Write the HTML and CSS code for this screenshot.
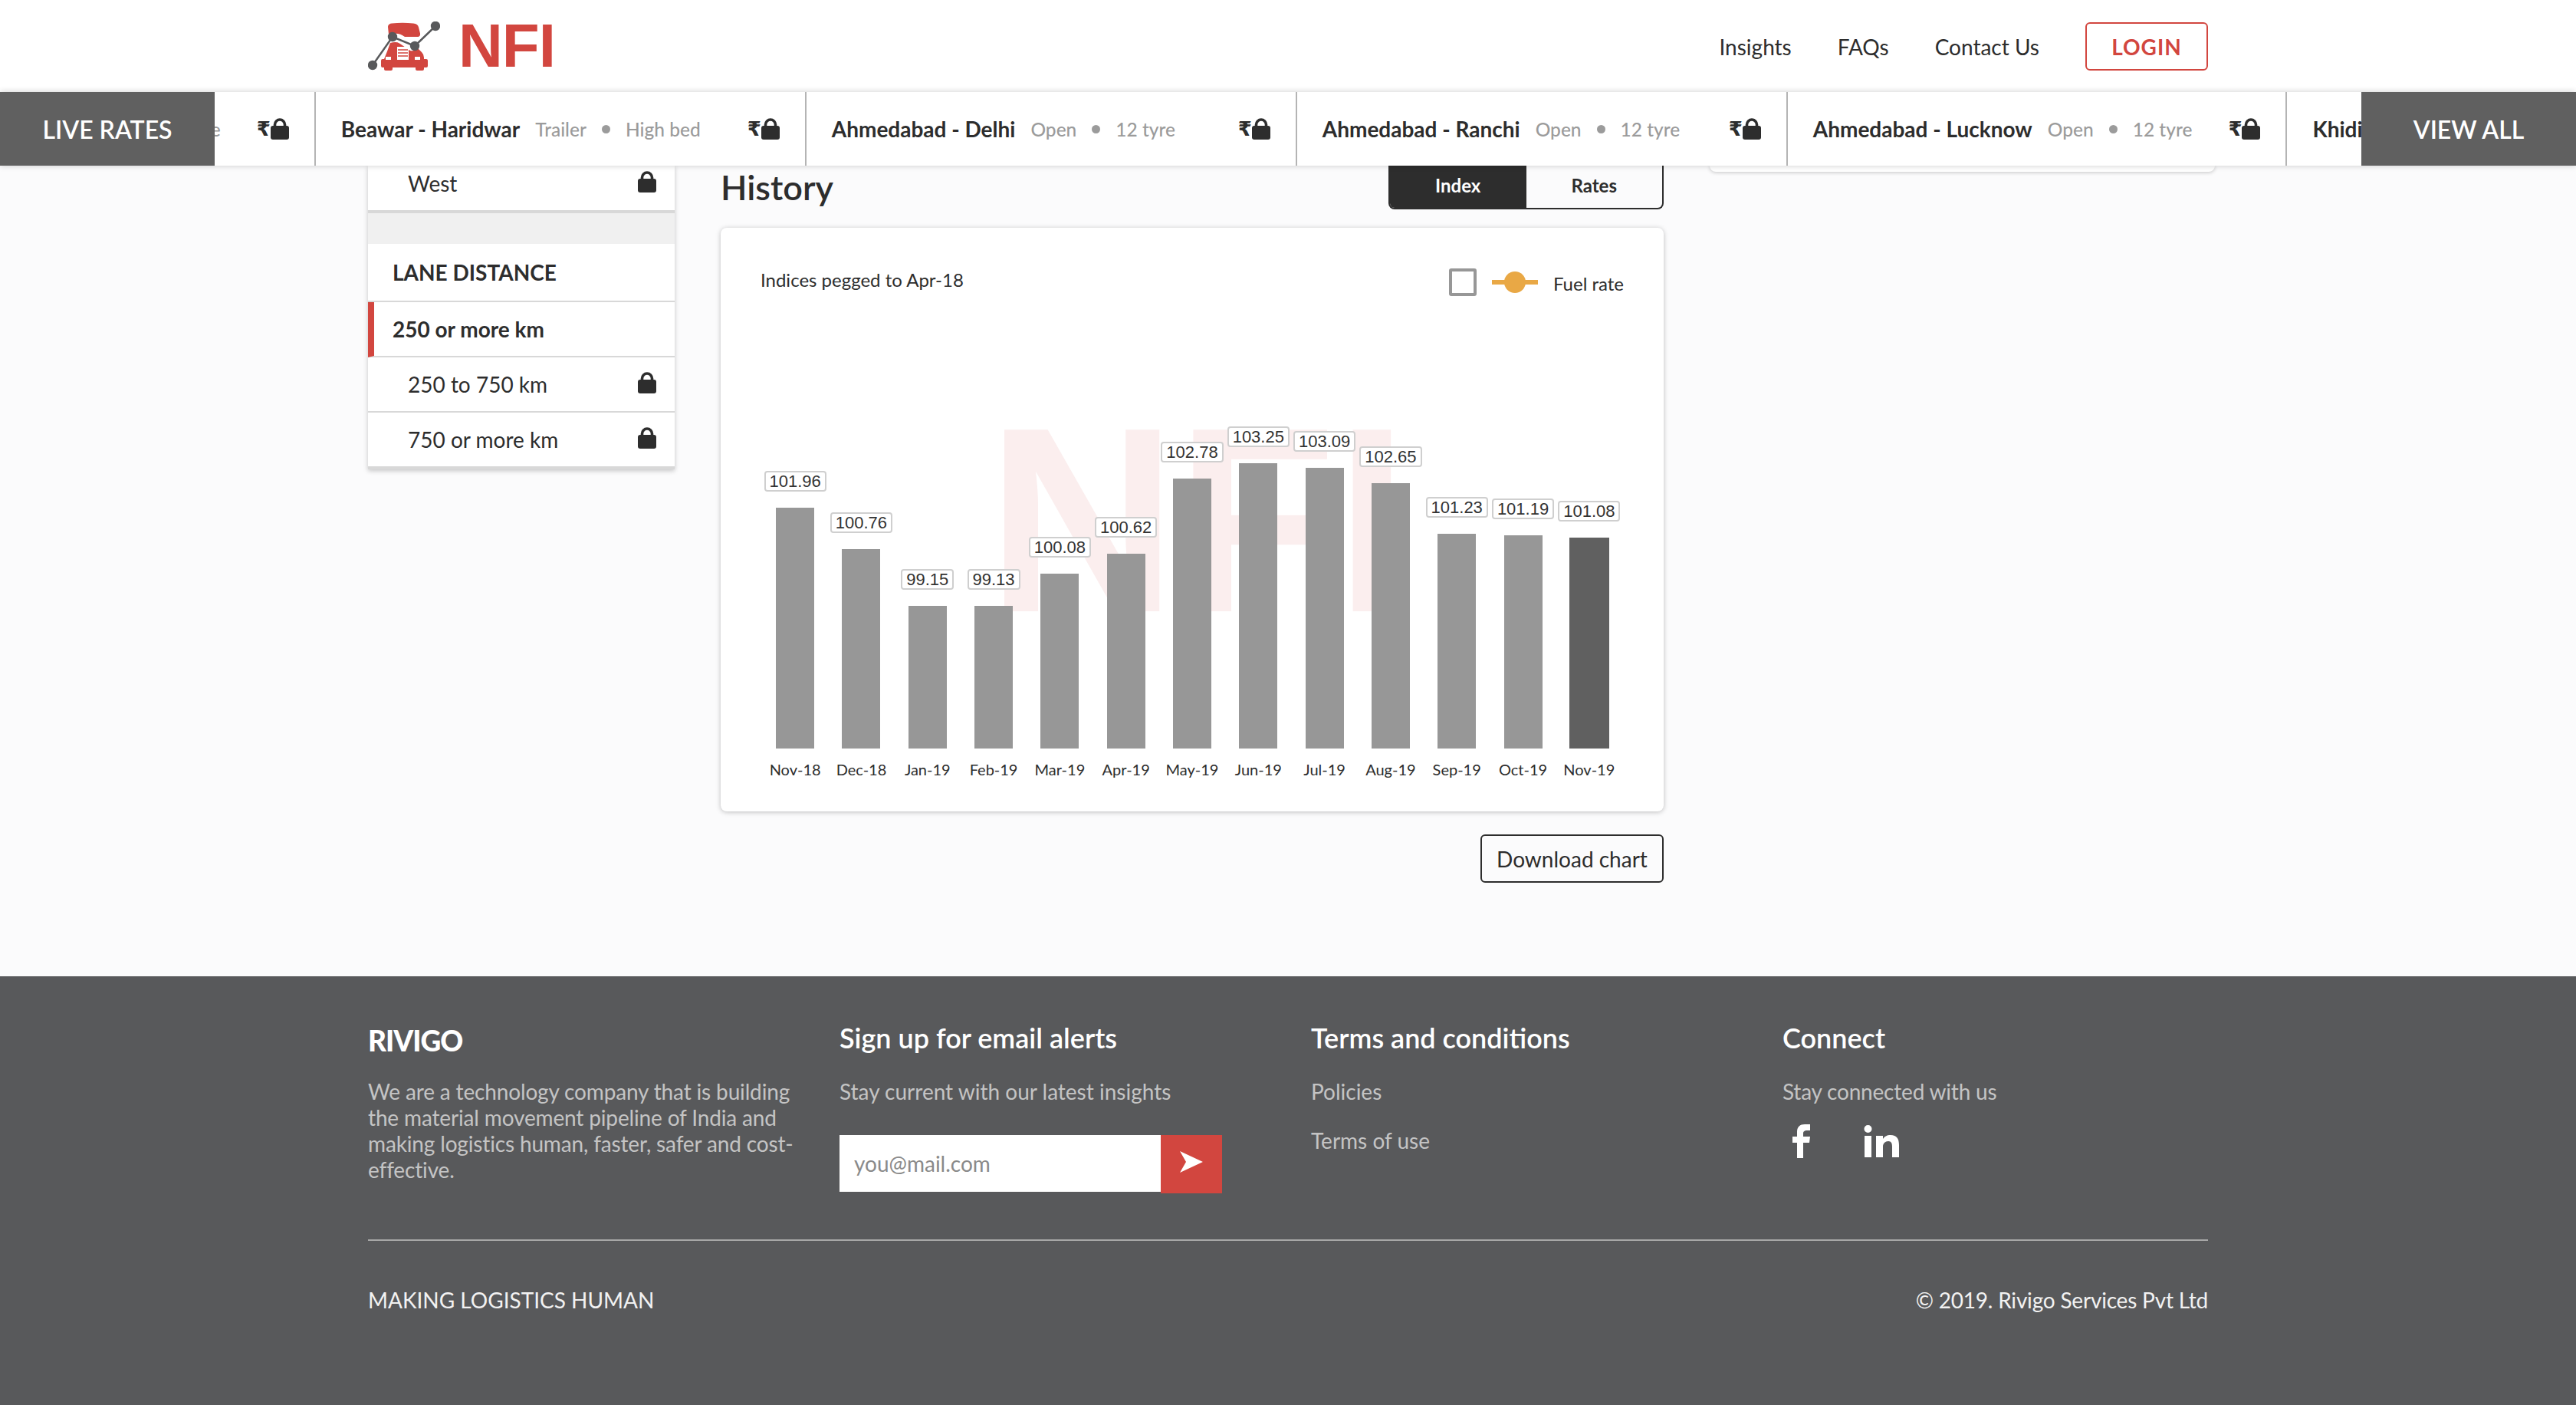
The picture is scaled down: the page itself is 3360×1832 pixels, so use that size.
FILE: index.html
```html
<!DOCTYPE html>
<html lang="en">
<head>
<meta charset="utf-8">
<title>NFI - History</title>
<link rel="stylesheet" href="styles.css">
</head>
<body>
<svg class="defs" width="0" height="0" aria-hidden="true">
  <symbol id="lock" viewBox="0 0 24 28">
    <path d="M5.500 12V8.500a6.500 6.500 0 0 1 13 0V12" fill="none" stroke="currentColor" stroke-width="3.600"/>
    <rect x="0" y="10" width="24" height="18" rx="3" fill="currentColor"/>
  </symbol>
</svg>

<header class="topbar">
  <a class="logo">
    <svg class="logo-mark" viewBox="0 0 94 64" width="94" height="64">
      <path fill="#d2463f" d="M26 7q0-4 5-4.500q14-1.500 28 0q6 .5 7 5l2 8q.5 4-3 4.500H48q-8-6-17-3.500l-4 .5z"/>
      <path fill="#d2463f" d="M29 28q8-2 12 .5L55 38q6 1 10-3l5 5q3 3 3 7v2h3q2 0 2 2v7q0 2-2 2h-3v2q0 2-2 2h-7q-2 0-2-2v-2H32v2q0 2-2 2h-7q-2 0-2-2v-2h-2q-2 0-2-2v-7q0-2 2-2h2l4-10z"/>
      <path fill="#fff" d="M38 33h15v17H38z"/>
      <path stroke="#d2463f" stroke-width="1.500" d="M39 37h13M39 41h13M39 45h13"/>
      <path fill="#fff" d="M23 46h7v4h-7zM61 46h7v4h-7z"/>
      <path fill="none" stroke="#fff" stroke-width="6" d="M32 20l29 12"/>
      <path fill="none" stroke="#58595b" stroke-width="2.500" d="M6 57L32 20l29 12L88 6"/>
      <g fill="#58595b"><circle cx="6" cy="57" r="6.200"/><circle cx="32" cy="20" r="6.200"/><circle cx="61" cy="32" r="6.200"/><circle cx="88" cy="6" r="6.200"/></g>
    </svg>
    <span class="logo-text">NFI</span>
  </a>
  <nav class="topnav">
    <a>Insights</a>
    <a>FAQs</a>
    <a>Contact Us</a>
    <a class="login">LOGIN</a>
  </nav>
</header>

<section class="ticker">
  <div class="ticker-cap cap-left">LIVE RATES</div>
  <div class="ticker-track">
    <div class="rate rate-first">
      <div class="rate-info"><b>Ahmedabad - Lucknow</b><span>Open</span><i></i><span>12 tyre</span></div>
      <div class="price"><span>₹</span><svg><use href="#lock"/></svg></div>
    </div>
    <div class="rate">
      <div class="rate-info"><b>Beawar - Haridwar</b><span>Trailer</span><i></i><span>High bed</span></div>
      <div class="price"><span>₹</span><svg><use href="#lock"/></svg></div>
    </div>
    <div class="rate">
      <div class="rate-info"><b>Ahmedabad - Delhi</b><span>Open</span><i></i><span>12 tyre</span></div>
      <div class="price"><span>₹</span><svg><use href="#lock"/></svg></div>
    </div>
    <div class="rate">
      <div class="rate-info"><b>Ahmedabad - Ranchi</b><span>Open</span><i></i><span>12 tyre</span></div>
      <div class="price"><span>₹</span><svg><use href="#lock"/></svg></div>
    </div>
    <div class="rate">
      <div class="rate-info"><b>Ahmedabad - Lucknow</b><span>Open</span><i></i><span>12 tyre</span></div>
      <div class="price"><span>₹</span><svg><use href="#lock"/></svg></div>
    </div>
    <div class="rate">
      <div class="rate-info"><b>Khidirpur - Delhi</b><span>Open</span><i></i><span>12 tyre</span></div>
    </div>
  </div>
  <div class="ticker-cap cap-right">VIEW ALL</div>
</section>

<main class="page">
  <aside class="filters">
    <div class="filter-row locked west"><span>West</span><svg class="lock"><use href="#lock"/></svg></div>
    <div class="filter-gap"></div>
    <div class="filter-title">LANE DISTANCE</div>
    <div class="filter-row active"><span>250 or more km</span></div>
    <div class="filter-row locked"><span>250 to 750 km</span><svg class="lock"><use href="#lock"/></svg></div>
    <div class="filter-row locked last"><span>750 or more km</span><svg class="lock"><use href="#lock"/></svg></div>
  </aside>

  <section class="history">
    <div class="history-head">
      <h1>History</h1>
      <div class="toggle"><span class="on">Index</span><span>Rates</span></div>
    </div>
    <div class="card">
      <div class="watermark">NFI</div>
      <div class="card-head">
        <span class="pegged">Indices pegged to Apr-18</span>
        <div class="legend">
          <span class="check"></span>
          <span class="legend-line"><em></em></span>
          <span class="legend-text">Fuel rate</span>
        </div>
      </div>
      <div class="chart">
        <div class="col"><span class="val">101.96</span><div class="bar" style="height:314px"></div><span class="month">Nov-18</span></div>
        <div class="col"><span class="val">100.76</span><div class="bar" style="height:260px"></div><span class="month">Dec-18</span></div>
        <div class="col"><span class="val">99.15</span><div class="bar" style="height:186px"></div><span class="month">Jan-19</span></div>
        <div class="col"><span class="val">99.13</span><div class="bar" style="height:186px"></div><span class="month">Feb-19</span></div>
        <div class="col"><span class="val">100.08</span><div class="bar" style="height:228px"></div><span class="month">Mar-19</span></div>
        <div class="col"><span class="val">100.62</span><div class="bar" style="height:254px"></div><span class="month">Apr-19</span></div>
        <div class="col"><span class="val">102.78</span><div class="bar" style="height:352px"></div><span class="month">May-19</span></div>
        <div class="col"><span class="val">103.25</span><div class="bar" style="height:372px"></div><span class="month">Jun-19</span></div>
        <div class="col"><span class="val">103.09</span><div class="bar" style="height:366px"></div><span class="month">Jul-19</span></div>
        <div class="col"><span class="val">102.65</span><div class="bar" style="height:346px"></div><span class="month">Aug-19</span></div>
        <div class="col"><span class="val">101.23</span><div class="bar" style="height:280px"></div><span class="month">Sep-19</span></div>
        <div class="col"><span class="val">101.19</span><div class="bar" style="height:278px"></div><span class="month">Oct-19</span></div>
        <div class="col current"><span class="val">101.08</span><div class="bar" style="height:275px"></div><span class="month">Nov-19</span></div>
      </div>
    </div>
    <div class="download-row"><button class="download">Download chart</button></div>
  </section>

  <aside class="side-card"></aside>
</main>

<footer class="footer">
  <div class="footer-inner">
    <div class="footer-grid">
      <div>
        <div class="rivigo">RIVIGO</div>
        <p class="foot-text about">We are a technology company that is building the material movement pipeline of India and making logistics human, faster, safer and cost-effective.</p>
      </div>
      <div>
        <h3>Sign up for email alerts</h3>
        <p class="foot-text">Stay current with our latest insights</p>
        <form class="signup">
          <input type="text" placeholder="you@mail.com">
          <button type="button" aria-label="Submit">
            <svg viewBox="0 0 30 28" width="30" height="28"><path fill="#fff" d="M0 0l30 14L0 28l8-14z"/></svg>
          </button>
        </form>
      </div>
      <div>
        <h3>Terms and conditions</h3>
        <p class="foot-text">Policies</p>
        <p class="foot-text terms">Terms of use</p>
      </div>
      <div>
        <h3>Connect</h3>
        <p class="foot-text connected">Stay connected with us</p>
        <div class="social">
          <svg viewBox="0 0 23 44" width="23" height="44"><path fill="#fff" d="M6 44V24H0v-8h6v-6C6 3 10 0 16 0h7v8h-4c-3 0-5 1-5 4v4h9l-1 8h-8v20z"/></svg>
          <svg viewBox="0 0 46 42" width="46" height="42"><path fill="#fff" d="M1 14h9v28H1zM5.500 0a5 5 0 1 1 0 10 5 5 0 0 1 0-10zM16 14h9v4c2-3 5-5 10-5 8 0 11 5 11 13v16h-9V28c0-4-1-7-5-7s-7 3-7 7v14h-9z"/></svg>
        </div>
      </div>
    </div>
    <div class="footer-bottom">
      <span>MAKING LOGISTICS HUMAN</span>
      <span class="copyright">© 2019. Rivigo Services Pvt Ltd</span>
    </div>
  </div>
</footer>
</body>
</html>
```

FILE: styles.css
```css
* { box-sizing: border-box; }
html, body { margin: 0; padding: 0; }
body {
  width: 3360px;
  background: #fbfbfc;
  color: #2d2d2d;
  font-family: Lato, "Noto Sans", sans-serif;
  font-size: 28px;
  overflow-x: hidden;
}
.defs { position: absolute; }

/* header */
.topbar {
  height: 120px;
  background: #fff;
  padding: 0 480px;
  display: flex;
  align-items: center;
  justify-content: space-between;
}
.logo { display: flex; align-items: center; gap: 24px; }
.logo-mark { display: block; }
.logo-text {
  font-family: "Liberation Sans", Arial, sans-serif;
  font-weight: 700;
  font-size: 80px;
  line-height: 80px;
  letter-spacing: -1px;
  color: #d2463f;
}
.topnav { display: flex; align-items: center; gap: 60px; }
.topnav a { line-height: 40px; padding-top: 2px; }
.login {
  width: 160px;
  height: 63px;
  display: flex;
  align-items: center;
  justify-content: center;
  border: 2px solid #d2463f;
  border-radius: 6px;
  color: #d2463f;
  font-weight: 700;
  letter-spacing: 1px;
}

/* ticker */
.ticker {
  position: relative;
  z-index: 2;
  height: 96px;
  background: #fff;
  box-shadow: 0 0 8px rgba(0, 0, 0, .2);
  overflow: hidden;
}
.ticker-cap {
  position: absolute;
  top: 0;
  bottom: 0;
  z-index: 1;
  display: flex;
  align-items: center;
  justify-content: center;
  background: #606060;
  color: #fff;
  font-size: 32px;
  font-weight: 600;
}
.cap-left { left: 0; width: 280px; }
.cap-right { right: 0; width: 280px; }
.ticker-track { display: flex; height: 96px; }
.rate {
  flex: none;
  min-width: 640px;
  padding: 0 33px 0 33px;
  display: flex;
  align-items: center;
  justify-content: space-between;
  border-right: 2px solid #b4b4b4;
}
.rate-first { margin-left: -240px; }
.rate-info {
  display: flex;
  align-items: center;
  margin-right: 47px;
  font-size: 24.500px;
  font-weight: 500;
  color: #9b9b9b;
  white-space: nowrap;
}
.rate-info b {
  font-size: 28px;
  font-weight: 700;
  color: #2d2d2d;
  margin-right: 20px;
}
.rate-info i {
  width: 11px;
  height: 11px;
  margin: 0 20px;
  border-radius: 50%;
  background: #9b9b9b;
}
.price { display: flex; align-items: center; color: #2d2d2d; }
.price span {
  font-family: "DejaVu Sans", sans-serif;
  font-size: 26px;
  font-weight: 700;
  line-height: 28px;
}
.price svg { width: 24px; height: 28px; display: block; }

/* page */
.page {
  width: 2400px;
  margin: 0 auto;
  display: flex;
  gap: 60px;
  align-items: flex-start;
}
.filters {
  flex: none;
  width: 400px;
  background: #fff;
  box-shadow: 0 2px 6px rgba(0, 0, 0, .22);
  border-bottom: 4px solid #d8d8d8;
}
.filter-row {
  height: 72px;
  padding: 0 24px 0 52px;
  display: flex;
  align-items: center;
  justify-content: space-between;
  border-bottom: 2px solid #d8d8d8;
}
.filter-row.west { height: 62px; border-bottom: 4px solid #d8d8d8; padding-bottom: 12px; }
.filter-row.last { height: 70px; border-bottom: 0; }
.filter-row.active { padding-left: 24px; border-left: 8px solid #d2463f; font-weight: 700; }
.lock { width: 24px; height: 28px; color: #2d2d2d; display: block; }
.filter-row.west .lock { margin-top: -4px; }
.filter-row:not(.west) .lock { margin-top: -5px; }
.filter-gap { height: 40px; background: #f0f0f0; }
.filter-title {
  height: 76px;
  padding: 0 32px;
  display: flex;
  align-items: center;
  font-weight: 700;
  border-bottom: 2px solid #d8d8d8;
}
.history { flex: none; width: 1230px; padding-bottom: 122px; }
.history-head {
  height: 57px;
  display: flex;
  align-items: center;
  justify-content: space-between;
}
.history-head h1 { margin: 0; font-size: 45px; font-weight: 600; line-height: 57px; }
.toggle {
  align-self: stretch;
  width: 359px;
  display: flex;
  border: 2px solid #2d2d2d;
  border-top: 0;
  border-radius: 0 0 8px 8px;
  overflow: hidden;
  font-size: 24px;
  font-weight: 700;
}
.toggle span { flex: 1; display: flex; align-items: center; justify-content: center; padding-bottom: 4px; }
.toggle .on { background: #2d2d2d; color: #fff; }

.card {
  position: relative;
  height: 761px;
  margin-top: 24px;
  padding: 53px 54px 41px;
  display: flex;
  flex-direction: column;
  background: #fff;
  border-radius: 8px;
  box-shadow: 0 1px 6px rgba(0, 0, 0, .25);
}
.watermark {
  position: absolute;
  left: 347px;
  top: 191px;
  font-family: "Liberation Sans", Arial, sans-serif;
  font-weight: 700;
  font-size: 344px;
  line-height: 380px;
  letter-spacing: -2px;
  color: #fbeeee;
}
.card-head {
  position: relative;
  height: 36px;
  display: flex;
  justify-content: space-between;
  align-items: center;
  font-size: 24px;
}
.pegged { margin: -8px 0 0 -2px; }
.legend { display: flex; align-items: center; margin-right: -2px; }
.check {
  width: 36px;
  height: 36px;
  border: 4px solid #979797;
  border-radius: 3px;
  background: #fff;
}
.legend-line {
  position: relative;
  width: 60px;
  height: 6px;
  margin: 0 20px;
  background: #e9a845;
}
.legend-line em {
  position: absolute;
  left: 16px;
  top: -11px;
  width: 28px;
  height: 28px;
  border-radius: 50%;
  background: #e9a845;
}
.legend-text { margin-top: 2px; }
.chart {
  position: relative;
  flex: 1;
  display: grid;
  grid-template-columns: repeat(13, 1fr);
  align-items: end;
}
.col { display: flex; flex-direction: column; align-items: center; }
.val {
  height: 27px;
  padding: 0 5px;
  margin-bottom: 21px;
  display: flex;
  align-items: center;
  justify-content: center;
  background: #fff;
  border: 2px solid #cfcfcf;
  border-radius: 4px;
  font-family: "Liberation Sans", Arial, sans-serif;
  font-size: 22px;
  line-height: 1;
  color: #333;
}
.bar { width: 50px; background: #979797; }
.current .bar { width: 52px; background: #606060; }
.month {
  margin-top: 13px;
  font-size: 20px;
  line-height: 28px;
  white-space: nowrap;
}
.download-row { display: flex; justify-content: flex-end; margin-top: 30px; }
.download {
  width: 239px;
  height: 63px;
  padding: 0;
  background: transparent;
  border: 2px solid #2d2d2d;
  border-radius: 6px;
  color: #2d2d2d;
  font-family: inherit;
  font-size: 28px;
}
.side-card {
  flex: none;
  width: 659px;
  height: 8px;
  background: #fff;
  border-radius: 0 0 8px 8px;
  box-shadow: 0 1px 5px rgba(0, 0, 0, .22);
}

/* footer */
.footer { background: #58595b; color: #fff; }
.footer-inner { width: 2400px; margin: 0 auto; padding: 58px 0 120px; }
.footer-grid {
  display: grid;
  grid-template-columns: repeat(4, 555px);
  column-gap: 60px;
  height: 287px;
  border-bottom: 2px solid #a7a7a7;
}
.footer h3 { margin: 0; font-size: 36px; font-weight: 600; line-height: 44px; }
.foot-text { margin: 31px 0 0; color: #c4c4c4; font-size: 28px; line-height: 34px; }
.foot-text.about { width: 570px; margin-top: 27px; letter-spacing: -.150px; }
.foot-text.terms { margin-top: 30px; }
.foot-text.connected { letter-spacing: -.200px; }
.rivigo {
  padding-top: 4px;
  font-size: 37px;
  font-weight: 900;
  letter-spacing: -1px;
  line-height: 44px;
}
.signup { display: flex; align-items: flex-start; margin-top: 40px; }
.signup input {
  width: 419px;
  height: 74px;
  padding: 0 19px;
  border: 0;
  border-radius: 0;
  background: #fff;
  font-family: inherit;
  font-size: 28px;
}
.signup input::placeholder { color: #8a8a8a; opacity: 1; }
.signup button {
  width: 80px;
  height: 76px;
  padding: 0;
  border: 0;
  background: #d2463f;
  display: flex;
  align-items: center;
  justify-content: center;
}
.signup svg { display: block; margin-top: -6px; }
.social { display: flex; align-items: center; gap: 70px; margin: 26px 0 0 13px; }
.social svg { display: block; }
.footer-bottom {
  display: flex;
  justify-content: space-between;
  margin-top: 60px;
  line-height: 34px;
  color: #f2f2f2;
}
.copyright { letter-spacing: -.200px; }
```
